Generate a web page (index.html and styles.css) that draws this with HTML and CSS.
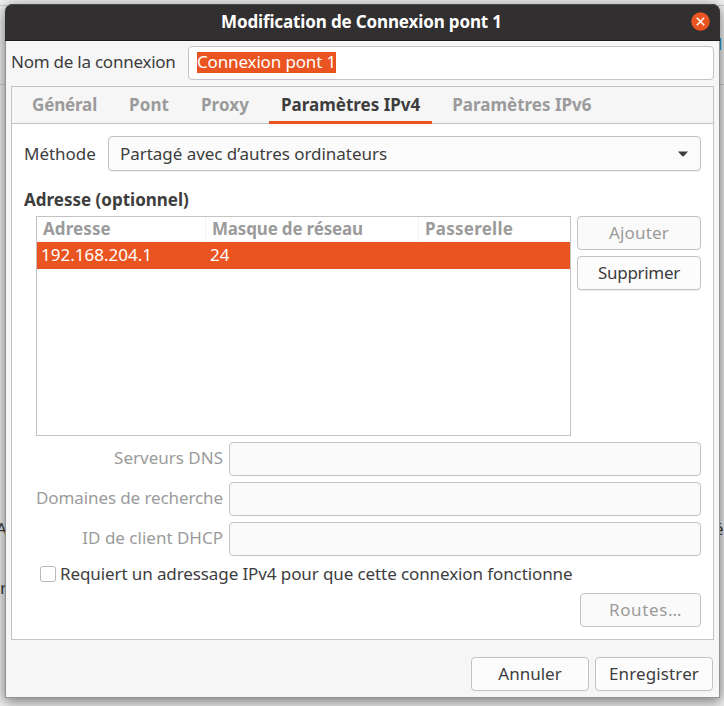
FILE: index.html
```
<!DOCTYPE html>
<html lang="fr">
<head>
<meta charset="utf-8">
<title>Modification de Connexion pont 1</title>
<link rel="stylesheet" href="styles.css">
</head>
<body>
<div class="backdrop">
  <span class="rule rule-top"></span>
  <span class="rule rule-mid"></span>
  <span class="peek peek-link">ll</span>
  <span class="peek peek-a">A</span>
  <span class="peek peek-r">r</span>
  <span class="peek peek-e">é</span>
</div>
<main class="window">
  <header class="titlebar">
    <h1 class="title">Modification de Connexion pont 1</h1>
    <button class="close" aria-label="Fermer">
      <svg width="19" height="19" viewBox="0 0 19 19"><circle cx="9.5" cy="9.5" r="9.3" fill="#e95420"/><path d="M5.8 5.8l7.4 7.4M13.2 5.8l-7.4 7.4" stroke="#fff" stroke-width="1.5" fill="none"/></svg>
    </button>
  </header>
  <div class="name-row">
    <label class="name-label">Nom de la connexion</label>
    <div class="entry name-entry"><span class="selection">Connexion pont 1</span></div>
  </div>
  <section class="notebook">
    <nav class="tabs">
      <span class="tab tab-general">Général</span>
      <span class="tab tab-bridge">Pont</span>
      <span class="tab tab-proxy">Proxy</span>
      <span class="tab active">Paramètres IPv4</span>
      <span class="tab">Paramètres IPv6</span>
    </nav>
    <div class="page">
      <div class="method-row">
        <label class="method-label">Méthode</label>
        <div class="combo"><span class="combo-text">Partagé avec d’autres ordinateurs</span>
          <svg width="10" height="6" viewBox="0 0 10 6"><path d="M0 .5h10L6 5Q5 5.8 4 5z" fill="#3d3d3d"/></svg>
        </div>
      </div>
      <h2 class="section-title">Adresse (optionnel)</h2>
      <div class="address-row">
        <div class="table">
          <div class="thead"><span class="th th-address">Adresse</span><span class="th th-mask">Masque de réseau</span><span class="th th-gateway">Passerelle</span></div>
          <div class="tr"><span class="td">192.168.204.1</span><span class="td">24</span><span class="td"></span></div>
        </div>
        <div class="side-buttons">
          <button class="button disabled wide">Ajouter</button>
          <button class="button narrow">Supprimer</button>
        </div>
      </div>
      <div class="fields">
        <label class="field-label">Serveurs DNS</label><div class="entry disabled"></div>
        <label class="field-label search">Domaines de recherche</label><div class="entry disabled"></div>
        <label class="field-label">ID de client DHCP</label><div class="entry disabled"></div>
      </div>
      <label class="check-row"><span class="checkbox"></span><span class="check-text">Requiert un adressage IPv4 pour que cette connexion fonctionne</span></label>
      <div class="routes-row"><button class="button disabled routes">Routes…</button></div>
    </div>
  </section>
  <footer class="actions">
    <button class="button action">Annuler</button>
    <button class="button action save">Enregistrer</button>
  </footer>
</main>
</body>
</html>
```
FILE: styles.css
```
* {
  box-sizing: border-box;
}

body {
  margin: 0;
  width: 724px;
  height: 706px;
  overflow: hidden;
  position: relative;
  background: #f2f2f2;
  font: 17px/24px "Noto Sans", sans-serif;
  color: #3d3d3d;
  padding: 4px 5px 0;
}

.backdrop {
  position: absolute;
  inset: 0;
}

.rule {
  position: absolute;
  left: 0;
  right: 0;
  height: 1px;
  background: #d0d0d0;
}

.rule-top { top: 5px; }
.rule-mid { top: 84px; }

.peek {
  position: absolute;
}

.peek-link { left: 718px; top: 32px; color: #1a9ae0; }
.peek-a { left: -4px; top: 517px; }
.peek-r { left: 0; top: 576px; }
.peek-e { left: 714px; top: 517px; }

.window {
  position: relative;
  width: 715px;
  height: 694px;
  padding: 0 1px 1px;
  background: #f6f6f6;
  background-clip: padding-box;
  border-radius: 8px 8px 0 0;
  box-shadow: inset 0 0 0 1px #919392, 0 3px 14px 1px rgba(0, 0, 0, 0.5);
}

.titlebar {
  height: 37px;
  margin: 0 -1px;
  background: #322f30;
  border-bottom: 1px solid #1c1a1a;
  border-radius: 8px 8px 0 0;
  box-shadow: inset 0 1px #4b4949;
  display: grid;
  grid-template-columns: 1fr auto 1fr;
  align-items: center;
}

.title {
  grid-column: 2;
  margin: 0 2px 0 0;
  font-size: 17px;
  font-weight: 700;
  line-height: 24px;
  letter-spacing: -0.14px;
  color: #fff;
}

.close {
  justify-self: end;
  margin-right: 10px;
  margin-bottom: 1px;
  padding: 0;
  border: 0;
  background: none;
  display: flex;
}

.name-row {
  display: flex;
  align-items: center;
  margin: 5px 5px 0;
  height: 34px;
}

.name-label {
  width: 177px;
  margin-top: -2px;
  white-space: nowrap;
  letter-spacing: -0.24px;
}

.entry {
  height: 34px;
  border: 1px solid #c3c3c3;
  border-radius: 4px;
  background: #fff;
}

.entry.disabled {
  background: #fafafa;
}

.name-entry {
  flex: 1;
  padding: 5px 8px;
}

.selection {
  display: block;
  width: 139px;
  height: 21px;
  line-height: 19px;
  white-space: nowrap;
  background: #e95420;
  color: #fff;
  letter-spacing: -0.15px;
}

.notebook {
  margin: 6px 5px 0;
  height: 554px;
  border: 1px solid #c3c3c3;
  background: #fff;
}

.tabs {
  height: 37px;
  background: #f6f6f6;
  border-bottom: 1px solid #c3c3c3;
  padding-left: 8px;
  display: flex;
  gap: 8px;
}

.tab {
  height: 37px;
  padding: 0 12px;
  line-height: 36px;
  font-weight: 700;
  color: #9b9b9b;
}

.tab-general { letter-spacing: -0.16px; }
.tab-bridge { letter-spacing: 0.08px; }
.tab-proxy { letter-spacing: 0.08px; }

.tab.active {
  color: #3d3d3d;
  border-bottom: 3px solid #e95420;
}

.page {
  padding: 12px;
}

.method-row {
  display: flex;
  height: 35px;
  align-items: center;
}

.method-label {
  width: 84px;
  letter-spacing: -0.04px;
}

.combo {
  flex: 1;
  height: 35px;
  border: 1px solid #c3c3c3;
  border-radius: 4px;
  background: #fbfbfb;
  box-shadow: 0 1px #f0f0f0;
  display: flex;
  align-items: center;
  justify-content: space-between;
  padding: 0 12px 0 11px;
}

.combo-text {
  letter-spacing: -0.04px;
}

.section-title {
  margin: 17px 0 4px;
  font-size: 17px;
  line-height: 24px;
}

.address-row {
  display: flex;
  gap: 6px;
  padding-left: 12px;
}

.table {
  width: 535px;
  height: 220px;
  border: 1px solid #c3c3c3;
}

.thead,
.tr {
  display: grid;
  grid-template-columns: 169px 213px 1fr;
}

.thead {
  height: 25px;
}

.th {
  padding-left: 6px;
  line-height: 23px;
  font-weight: 700;
  color: #9b9b9b;
  border-right: 1px solid #f3f3f3;
}

.th:last-child {
  border-right: 0;
}

.th-address { letter-spacing: 0.1px; }
.th-mask { letter-spacing: -0.18px; }
.th-gateway { letter-spacing: 0.25px; }

.tr {
  height: 27px;
  background: #e95420;
  color: #fff;
}

.td {
  padding-left: 4px;
  line-height: 26px;
}

.side-buttons {
  flex: 1;
  display: flex;
  flex-direction: column;
  gap: 6px;
}

.button {
  height: 34px;
  padding: 0 0 1px;
  border: 1px solid #c3c3c3;
  border-radius: 4px;
  background: #fcfcfc;
  box-shadow: 0 1px #f0f0f0;
  font: inherit;
  line-height: 31px;
  color: #3d3d3d;
}

.button.disabled {
  background: #fafafa;
  color: #9b9b9b;
  box-shadow: none;
}

.button.wide { letter-spacing: 0.2px; }
.button.narrow { letter-spacing: -0.3px; }

.fields {
  margin-top: 6px;
  display: grid;
  grid-template-columns: 199px 1fr;
  column-gap: 6px;
  row-gap: 6px;
  align-items: center;
}

.field-label {
  margin-top: -2px;
  text-align: right;
  white-space: nowrap;
  color: #9b9b9b;
}

.field-label.search {
  letter-spacing: -0.1px;
}

.check-row {
  display: flex;
  align-items: center;
  gap: 4px;
  height: 24px;
  margin: 6px 0 0 16px;
}

.checkbox {
  width: 16px;
  height: 16px;
  border: 1px solid #b8b8b8;
  border-radius: 3px;
  background: #fff;
}

.check-text {
  letter-spacing: -0.1px;
  white-space: nowrap;
}

.routes-row {
  display: flex;
  justify-content: flex-end;
  margin-top: 7px;
}

.routes {
  width: 121px;
  padding-left: 10px;
  letter-spacing: 0.6px;
}

.actions {
  display: flex;
  justify-content: flex-end;
  gap: 6px;
  margin: 17px 6px 0;
}

.action {
  width: 118px;
}

.save {
  letter-spacing: 0.13px;
}
```
